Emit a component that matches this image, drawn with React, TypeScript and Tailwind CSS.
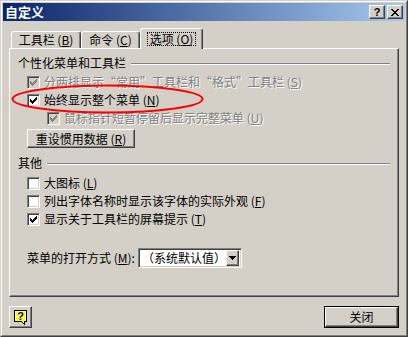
import React from "react";

const FONT = { fontFamily: '"Noto Sans CJK SC", "Noto Sans", sans-serif' };

function pix(rows: string[]) {
  let d = "";
  rows.forEach((r, y) => {
    for (let x = 0; x < r.length; x++) if (r[x] === "X") d += `M${x} ${y}h1v1h-1z`;
  });
  return d;
}

const CHECK = pix([
  "......X",
  ".....XX",
  "X...XXX",
  "XX.XXX.",
  "XXXXX..",
  ".XXX...",
  "..X....",
]);
const CLOSE = pix([
  "XX....XX",
  ".XX..XX.",
  "..XXXX..",
  "...XX...",
  "..XXXX..",
  ".XX..XX.",
  "XX....XX",
]);
const ARROW = pix(["XXXXXXX", ".XXXXX.", "..XXX..", "...X..."]);

function M({ k, colon }: { k: string; colon?: boolean }) {
  return (
    <span className="whitespace-pre">
      {" ("}
      <u>{k}</u>
      {")"}
      {colon ? ":" : ""}
    </span>
  );
}

function LQ() {
  return <span className="inline-block w-[12px] text-right">“</span>;
}
function RQ() {
  return <span className="inline-block w-[12px] text-left">”</span>;
}

function CheckBox({ checked, disabled }: { checked?: boolean; disabled?: boolean }) {
  return (
    <div
      className={`w-[13px] h-[13px] shrink-0 border border-t-[#808080] border-l-[#808080] border-b-white border-r-white shadow-[inset_1px_1px_0_#404040,inset_-1px_-1px_0_#d4d0c8] flex items-center justify-center ${
        disabled ? "bg-[#d4d0c8]" : "bg-white"
      }`}
    >
      {checked && (
        <svg width="7" height="7" viewBox="0 0 7 7" shapeRendering="crispEdges">
          <path d={CHECK} fill={disabled ? "#808080" : "#000"} />
        </svg>
      )}
    </div>
  );
}

function Row({
  checked,
  disabled,
  indent,
  children,
}: {
  checked?: boolean;
  disabled?: boolean;
  indent?: boolean;
  children: React.ReactNode;
}) {
  return (
    <div className={`h-[18px] flex items-center gap-[4px] ${indent ? "ml-[29px]" : "ml-[9px]"}`}>
      <CheckBox checked={checked} disabled={disabled} />
      <span
        className={`text-[12px] leading-[14px] whitespace-nowrap ${
          disabled ? "text-[#808080] [text-shadow:1px_1px_0_#ffffff]" : "text-black"
        }`}
      >
        {children}
      </span>
    </div>
  );
}

function Group({ label }: { label: string }) {
  return (
    <div className="h-[12px] flex items-center pr-[8px]">
      <span className="text-[12px] leading-[12px] whitespace-nowrap">{label}</span>
      <div className="flex-1 h-[2px] ml-[5px] mt-[2px] border-t border-t-[#808080] border-b border-b-white" />
    </div>
  );
}

const raised =
  "border border-t-white border-l-white border-b-[#404040] border-r-[#404040] shadow-[inset_-1px_-1px_0_#808080] bg-[#d4d0c8]";

export default function App() {
  return (
    <div className="w-[408px] h-[337px] relative overflow-hidden" style={FONT}>
      <div className="w-full h-full border border-t-[#d4d0c8] border-l-[#d4d0c8] border-b-[#404040] border-r-[#404040] bg-[#d4d0c8]">
        <div className="w-full h-full border border-t-white border-l-white border-b-[#808080] border-r-[#808080] p-[1px] flex flex-col">
          {/* Title bar */}
          <div className="h-[18px] shrink-0 bg-[linear-gradient(to_right,#0a246a,#a6caf0)] flex items-center pl-[2px] pr-[2px]">
            <span className="text-white font-bold text-[13px] leading-[14px] flex-1">自定义</span>
            <div className={`w-[16px] h-[14px] ${raised} flex items-center justify-center`}>
              <span className="text-[11px] leading-[11px] font-bold text-black" style={{ fontFamily: '"Liberation Sans", sans-serif' }}>
                ?
              </span>
            </div>
            <div className={`w-[16px] h-[14px] ml-[2px] ${raised} flex items-center justify-center`}>
              <svg width="8" height="7" viewBox="0 0 8 7" shapeRendering="crispEdges">
                <path d={CLOSE} fill="#000" />
              </svg>
            </div>
          </div>

          {/* Body */}
          <div className="flex-1 flex flex-col px-[6px] pt-[7px]">
            {/* Tabs */}
            <div className="h-[20px] flex items-end pl-[2px] text-[12px]">
              <div className="w-[70px] h-[17px] border-t border-l border-t-white border-l-white border-r border-r-[#404040] shadow-[inset_-1px_0_0_#808080] rounded-t-[3px] flex items-center justify-center leading-[12px] whitespace-nowrap">
                工具栏<M k="B" />
              </div>
              <div className="w-[59px] h-[17px] border-t border-l border-t-white border-l-white border-r border-r-[#404040] shadow-[inset_-1px_0_0_#808080] rounded-t-[3px] flex items-center justify-center leading-[12px] whitespace-nowrap">
                命令<M k="C" />
              </div>
              <div className="relative z-10 w-[63px] h-[21px] -mb-[1px] bg-[#d4d0c8] border-t border-l border-t-white border-l-white border-r border-r-[#404040] shadow-[inset_-1px_0_0_#808080] rounded-t-[3px] flex items-start justify-center pt-[3px]">
                <span className="border border-dotted border-black px-[2px] leading-[12px] whitespace-nowrap">
                  选项<M k="O" />
                </span>
              </div>
            </div>

            {/* Panel */}
            <div className="h-[249px] shrink-0 border border-t-white border-l-white border-b-[#404040] border-r-[#404040] shadow-[inset_-1px_-1px_0_#808080] flex flex-col pl-[8px] pt-[8px] text-[12px]">
              <Group label="个性化菜单和工具栏" />
              <div className="mt-[4px]">
                <Row checked disabled>
                  分两排显示<LQ />常用<RQ />工具栏和<LQ />格式<RQ />工具栏<M k="S" />
                </Row>
                <Row checked>
                  始终显示整个菜单<M k="N" />
                </Row>
                <Row checked disabled indent>
                  鼠标指针短暂停留后显示完整菜单<M k="U" />
                </Row>
              </div>
              <div className={`ml-[9px] mt-[2px] w-[108px] h-[19px] ${raised} flex items-center justify-center text-[12px] leading-[12px] whitespace-nowrap`}>
                重设惯用数据<M k="R" />
              </div>

              <div className="mt-[9px]">
                <Group label="其他" />
              </div>
              <div className="mt-[5px]">
                <Row>
                  大图标<M k="L" />
                </Row>
                <Row>
                  列出字体名称时显示该字体的实际外观<M k="F" />
                </Row>
                <Row checked>
                  显示关于工具栏的屏幕提示<M k="T" />
                </Row>
              </div>

              <div className="mt-[20px] ml-[9px] flex items-center">
                <span className="w-[111px] whitespace-nowrap leading-[12px]">
                  菜单的打开方式<M k="M" colon />
                </span>
                <div className="w-[104px] h-[20px] border border-t-[#808080] border-l-[#808080] border-b-white border-r-white shadow-[inset_1px_1px_0_#404040,inset_-1px_-1px_0_#d4d0c8] bg-white flex items-center p-[2px]">
                  <span className="flex-1 leading-[12px] pl-[1px] whitespace-nowrap">（系统默认值）</span>
                  <div className={`w-[16px] h-[16px] ${raised} flex items-center justify-center`}>
                    <svg width="7" height="4" viewBox="0 0 7 4" shapeRendering="crispEdges">
                      <path d={ARROW} fill="#000" />
                    </svg>
                  </div>
                </div>
              </div>
            </div>

            {/* Bottom buttons */}
            <div className="mt-[9px] h-[22px] flex justify-between">
              <div className={`w-[23px] h-[22px] ${raised} flex items-center justify-center`}>
                <svg width="16" height="16" viewBox="0 0 16 16" shapeRendering="crispEdges">
                  <defs>
                    <pattern id="dots" width="2" height="2" patternUnits="userSpaceOnUse">
                      <rect width="2" height="2" fill="#ffff00" />
                      <rect width="1" height="1" fill="#ffffff" />
                    </pattern>
                  </defs>
                  <path d="M1.5 1.5h12v11h-2v3l-3-3h-7z" fill="url(#dots)" stroke="#000" strokeWidth="1" />
                  <text x="7.5" y="11" textAnchor="middle" fontSize="11" fontWeight="bold" fill="#000080" fontFamily="Liberation Sans, sans-serif">
                    ?
                  </text>
                </svg>
              </div>
              <div className="w-[75px] h-[22px] border border-black">
                <div className="w-full h-full border border-t-white border-l-white border-b-[#404040] border-r-[#404040] shadow-[inset_-1px_-1px_0_#808080] bg-[#d4d0c8] flex items-center justify-center text-[12px] leading-[12px]">
                  关闭
                </div>
              </div>
            </div>
          </div>
        </div>
      </div>

      {/* Red annotation ellipse */}
      <svg className="absolute left-0 top-0 pointer-events-none" width="408" height="337">
        <ellipse cx="107.5" cy="99" rx="95" ry="13.5" fill="none" stroke="#ff0000" strokeWidth="2" />
      </svg>
    </div>
  );
}
